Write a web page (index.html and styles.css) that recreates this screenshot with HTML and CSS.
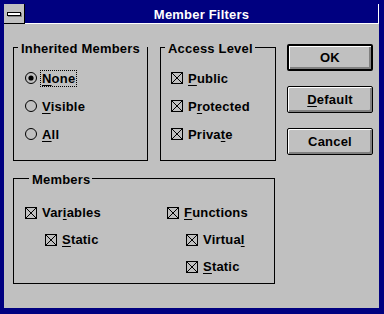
FILE: index.html
```html
<!DOCTYPE html>
<html>
<head>
<meta charset="utf-8">
<link rel="stylesheet" href="styles.css">
</head>
<body>
<div class="window">
  <div class="titlebar">
    <div class="sysmenu"><span class="sysbar"></span></div>
    <div class="caption">Member Filters</div>
  </div>
  <div class="client">
    <div class="top">
      <fieldset class="group g-inherited">
        <legend class="legend-wide">Inherited Members</legend>
        <div class="opt">
          <svg class="ctl" width="12" height="12" viewBox="0 0 12 12"><circle cx="6" cy="6" r="5.5" fill="none" stroke="#000"/><circle cx="6" cy="6" r="2.6" fill="#000"/></svg>
          <span class="lbl focus"><u>N</u>one</span>
        </div>
        <div class="opt">
          <svg class="ctl" width="12" height="12" viewBox="0 0 12 12"><circle cx="6" cy="6" r="5.5" fill="none" stroke="#000"/></svg>
          <span class="lbl"><u>V</u>isible</span>
        </div>
        <div class="opt">
          <svg class="ctl" width="12" height="12" viewBox="0 0 12 12"><circle cx="6" cy="6" r="5.5" fill="none" stroke="#000"/></svg>
          <span class="lbl"><u>A</u>ll</span>
        </div>
      </fieldset>
      <fieldset class="group g-access">
        <legend>Access Level</legend>
        <div class="opt">
          <svg class="ctl" width="12" height="12" viewBox="0 0 12 12" shape-rendering="crispEdges"><rect x="0.5" y="0.5" width="11" height="11" fill="none" stroke="#000"/><path d="M0 0L12 12M12 0L0 12" stroke="#000"/></svg>
          <span class="lbl"><u>P</u>ublic</span>
        </div>
        <div class="opt">
          <svg class="ctl" width="12" height="12" viewBox="0 0 12 12" shape-rendering="crispEdges"><rect x="0.5" y="0.5" width="11" height="11" fill="none" stroke="#000"/><path d="M0 0L12 12M12 0L0 12" stroke="#000"/></svg>
          <span class="lbl">P<u>r</u>otected</span>
        </div>
        <div class="opt">
          <svg class="ctl" width="12" height="12" viewBox="0 0 12 12" shape-rendering="crispEdges"><rect x="0.5" y="0.5" width="11" height="11" fill="none" stroke="#000"/><path d="M0 0L12 12M12 0L0 12" stroke="#000"/></svg>
          <span class="lbl">Priva<u>t</u>e</span>
        </div>
      </fieldset>
      <div class="buttons">
        <div class="btn default">OK</div>
        <div class="btn"><span><u>D</u>efault</span></div>
        <div class="btn">Cancel</div>
      </div>
    </div>
    <fieldset class="group g-members">
      <legend>Members</legend>
      <div class="cols">
        <div class="col col-left">
          <div class="opt mrow">
            <svg class="ctl" width="12" height="12" viewBox="0 0 12 12" shape-rendering="crispEdges"><rect x="0.5" y="0.5" width="11" height="11" fill="none" stroke="#000"/><path d="M0 0L12 12M12 0L0 12" stroke="#000"/></svg>
            <span class="lbl">Var<u>i</u>ables</span>
          </div>
          <div class="opt mrow sub-left">
            <svg class="ctl" width="12" height="12" viewBox="0 0 12 12" shape-rendering="crispEdges"><rect x="0.5" y="0.5" width="11" height="11" fill="none" stroke="#000"/><path d="M0 0L12 12M12 0L0 12" stroke="#000"/></svg>
            <span class="lbl"><u>S</u>tatic</span>
          </div>
        </div>
        <div class="col col-right">
          <div class="opt mrow">
            <svg class="ctl" width="12" height="12" viewBox="0 0 12 12" shape-rendering="crispEdges"><rect x="0.5" y="0.5" width="11" height="11" fill="none" stroke="#000"/><path d="M0 0L12 12M12 0L0 12" stroke="#000"/></svg>
            <span class="lbl"><u>F</u>unctions</span>
          </div>
          <div class="opt mrow sub-right">
            <svg class="ctl" width="12" height="12" viewBox="0 0 12 12" shape-rendering="crispEdges"><rect x="0.5" y="0.5" width="11" height="11" fill="none" stroke="#000"/><path d="M0 0L12 12M12 0L0 12" stroke="#000"/></svg>
            <span class="lbl">Virtua<u>l</u></span>
          </div>
          <div class="opt mrow sub-right">
            <svg class="ctl" width="12" height="12" viewBox="0 0 12 12" shape-rendering="crispEdges"><rect x="0.5" y="0.5" width="11" height="11" fill="none" stroke="#000"/><path d="M0 0L12 12M12 0L0 12" stroke="#000"/></svg>
            <span class="lbl"><u>S</u>tatic</span>
          </div>
        </div>
      </div>
    </fieldset>
  </div>
</div>
</body>
</html>
```
FILE: styles.css
```css
* { box-sizing: border-box; }
html, body { margin: 0; padding: 0; background: #000080; }
body {
  font-family: "Liberation Sans", Arial, sans-serif;
  font-weight: bold;
  font-size: 13px;
  letter-spacing: 0.2px;
  color: #000;
}
.window {
  width: 384px;
  height: 314px;
  border-style: solid;
  border-color: #000080;
  border-width: 4px 5px 6px 4px;
  background: #c0c0c0;
  display: flex;
  flex-direction: column;
}
.titlebar { display: flex; height: 20px; flex: none; }
.sysmenu {
  width: 21px;
  background: #c0c0c0;
  border-right: 1px solid #000;
  border-bottom: 1px solid #000;
  display: flex;
  align-items: center;
  padding-left: 3px;
}
.sysbar {
  display: block;
  width: 14px;
  height: 4px;
  background: #fff;
  border: 1px solid #000;
  box-shadow: 1px 1px 0 #808080;
}
.caption {
  flex: 1;
  background: #000080;
  color: #fff;
  text-align: center;
  line-height: 17px;
  padding-top: 2px;
  border-bottom: 1px solid #fff;
  border-right: 1px solid #fff;
}
.client { flex: 1; padding: 14px 6px 0 9px; }
.top { display: flex; align-items: flex-start; }
.group {
  margin: 0;
  border: 1px solid #000;
  min-width: 0;
  flex: none;
}
legend {
  padding: 4px 2px 0 3px;
  margin-left: 4px;
  line-height: 14px;
  white-space: nowrap;
}
.legend-wide { width: 129px; }
.g-inherited { width: 135px; margin-right: 12px; padding: 8px 0 12px 0; }
.g-inherited .opt { padding-left: 11px; }
.g-access { width: 116px; margin-right: 11px; padding: 8px 0 12px 0; }
.g-access .opt { padding-left: 10px; }
.opt { height: 28px; display: flex; align-items: center; }
.ctl { flex: none; margin-right: 5px; display: block; }
.lbl { line-height: 15px; }
.focus { outline: 1px dotted #000; padding: 0 1px; margin-left: -1px; }
u { text-decoration-thickness: 1px; text-underline-offset: 2px; }
.buttons {
  width: 86px;
  flex: none;
  margin-top: 6px;
  display: flex;
  flex-direction: column;
  gap: 15px;
}
.btn {
  height: 27px;
  display: flex;
  align-items: center;
  justify-content: center;
  border: 1px solid #000;
  border-radius: 2px;
  background: #c0c0c0;
  box-shadow: inset 1px 1px 0 #fff, inset -2px -2px 0 #808080;
}
.btn.default { border-width: 2px; }
.g-members { width: 262px; margin-top: 8px; padding: 12px 0 3px 11px; }
.cols { display: flex; }
.col-left { width: 142px; }
.mrow { height: 27px; }
.sub-left { padding-left: 20px; }
.sub-right { padding-left: 19px; }
```
